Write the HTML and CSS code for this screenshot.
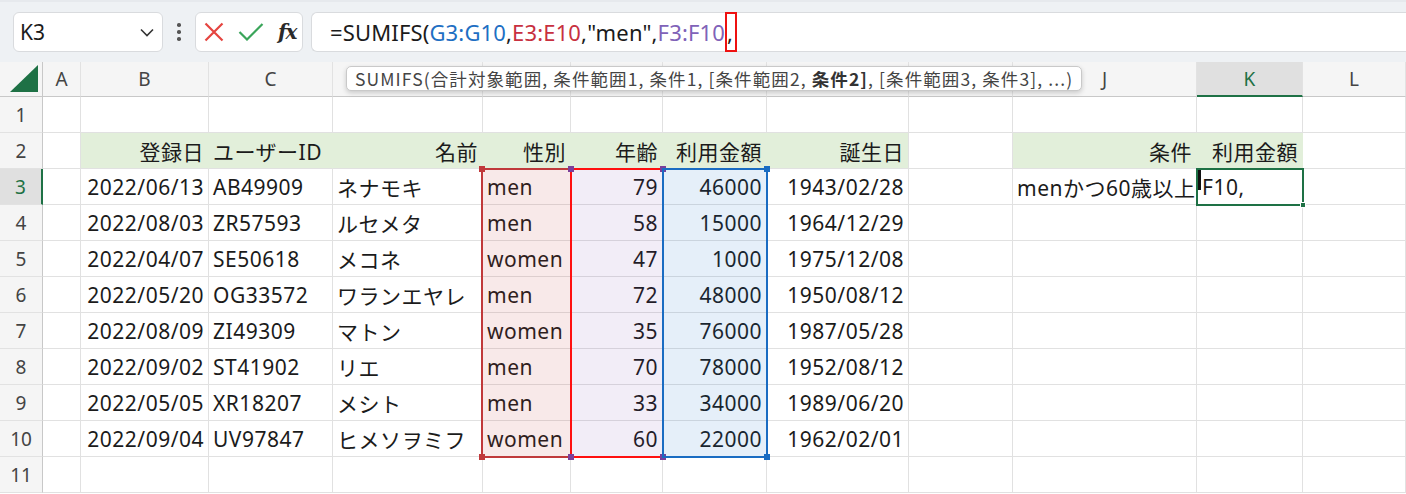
FILE: index.html
```html
<!DOCTYPE html>
<html lang="ja">
<head>
<meta charset="utf-8">
<title>SUMIFS</title>
<link rel="stylesheet" href="styles.css">
</head>
<body>
<div class="toolbar">
  <div class="namebox">
    <span class="nb-text">K3</span>
    <svg class="chev" width="14" height="9" viewBox="0 0 14 9"><path d="M1 1.5 L7 7.5 L13 1.5" fill="none" stroke="#333" stroke-width="1.6"/></svg>
  </div>
  <div class="dots"><span></span><span></span><span></span></div>
  <div class="iconbox">
    <svg width="20" height="20" viewBox="0 0 20 20"><path d="M1.5 1.5 L18.5 18.5 M18.5 1.5 L1.5 18.5" stroke="#e5443f" stroke-width="2.2" fill="none"/></svg>
    <svg width="26" height="18" viewBox="0 0 26 18"><path d="M1.5 9 L9 16.5 L24.5 1" stroke="#3aa55a" stroke-width="2.2" fill="none"/></svg>
    <span class="fx">fx</span>
  </div>
  <div class="formula">
    <span class="f-plain">=SUMIFS(</span><span class="f-blue">G3:G10</span><span class="f-plain">,</span><span class="f-red">E3:E10</span><span class="f-plain">,"men",</span><span class="f-purple">F3:F10</span><span class="f-cursor">,</span>
  </div>
</div>

<div class="sheetwrap">
  <div class="sheet">
    <div class="corner"><svg width="28" height="27" viewBox="0 0 28 27"><polygon points="28,0 28,27 0,27" fill="#1e7145"/></svg></div>
    <div class="hd">A</div><div class="hd">B</div><div class="hd">C</div><div class="hd"></div><div class="hd"></div><div class="hd"></div><div class="hd"></div><div class="hd"></div><div class="hd"></div><div class="hd">J</div><div class="hd hsel">K</div><div class="hd">L</div>

    <div class="rn">1</div><div class="c"></div><div class="c"></div><div class="c"></div><div class="c"></div><div class="c"></div><div class="c"></div><div class="c"></div><div class="c"></div><div class="c"></div><div class="c"></div><div class="c"></div><div class="c"></div>

    <div class="rn">2</div><div class="c"></div><div class="c r gf">登録日</div><div class="c gf">ユーザーID</div><div class="c r gf">名前</div><div class="c r gf">性別</div><div class="c r gf">年齢</div><div class="c r gf">利用金額</div><div class="c r gf gl">誕生日</div><div class="c"></div><div class="c r gf">条件</div><div class="c r gf">利用金額</div><div class="c"></div>

    <div class="rn rsel">3</div><div class="c"></div><div class="c r">2022/06/13</div><div class="c">AB49909</div><div class="c">ネナモキ</div><div class="c">men</div><div class="c r">79</div><div class="c r">46000</div><div class="c r">1943/02/28</div><div class="c"></div><div class="c">menかつ60歳以上</div><div class="c edit"><span class="ibar"></span>F10,</div><div class="c"></div>

    <div class="rn">4</div><div class="c"></div><div class="c r">2022/08/03</div><div class="c">ZR57593</div><div class="c">ルセメタ</div><div class="c">men</div><div class="c r">58</div><div class="c r">15000</div><div class="c r">1964/12/29</div><div class="c"></div><div class="c"></div><div class="c"></div><div class="c"></div>

    <div class="rn">5</div><div class="c"></div><div class="c r">2022/04/07</div><div class="c">SE50618</div><div class="c">メコネ</div><div class="c">women</div><div class="c r">47</div><div class="c r">1000</div><div class="c r">1975/12/08</div><div class="c"></div><div class="c"></div><div class="c"></div><div class="c"></div>

    <div class="rn">6</div><div class="c"></div><div class="c r">2022/05/20</div><div class="c">OG33572</div><div class="c">ワランエヤレ</div><div class="c">men</div><div class="c r">72</div><div class="c r">48000</div><div class="c r">1950/08/12</div><div class="c"></div><div class="c"></div><div class="c"></div><div class="c"></div>

    <div class="rn">7</div><div class="c"></div><div class="c r">2022/08/09</div><div class="c">ZI49309</div><div class="c">マトン</div><div class="c">women</div><div class="c r">35</div><div class="c r">76000</div><div class="c r">1987/05/28</div><div class="c"></div><div class="c"></div><div class="c"></div><div class="c"></div>

    <div class="rn">8</div><div class="c"></div><div class="c r">2022/09/02</div><div class="c">ST41902</div><div class="c">リエ</div><div class="c">men</div><div class="c r">70</div><div class="c r">78000</div><div class="c r">1952/08/12</div><div class="c"></div><div class="c"></div><div class="c"></div><div class="c"></div>

    <div class="rn">9</div><div class="c"></div><div class="c r">2022/05/05</div><div class="c">XR18207</div><div class="c">メシト</div><div class="c">men</div><div class="c r">33</div><div class="c r">34000</div><div class="c r">1989/06/20</div><div class="c"></div><div class="c"></div><div class="c"></div><div class="c"></div>

    <div class="rn">10</div><div class="c"></div><div class="c r">2022/09/04</div><div class="c">UV97847</div><div class="c">ヒメソヲミフ</div><div class="c">women</div><div class="c r">60</div><div class="c r">22000</div><div class="c r">1962/02/01</div><div class="c"></div><div class="c"></div><div class="c"></div><div class="c"></div>

    <div class="rn">11</div><div class="c"></div><div class="c"></div><div class="c"></div><div class="c"></div><div class="c"></div><div class="c"></div><div class="c"></div><div class="c"></div><div class="c"></div><div class="c"></div><div class="c"></div><div class="c"></div>
  </div>

  <div class="range range-e"><i class="tl"></i><i class="tr"></i><i class="bl"></i><i class="br"></i></div>
  <div class="range range-f"><i class="tl"></i><i class="tr"></i><i class="bl"></i><i class="br"></i></div>
  <div class="range range-g"><i class="tl"></i><i class="tr"></i><i class="bl"></i><i class="br"></i></div>
  <div class="active"><i class="br"></i></div>

  <div class="tip">SUMIFS(合計対象範囲, 条件範囲1, 条件1, [条件範囲2, <b>条件2]</b>, [条件範囲3, 条件3], ...)</div>
</div>
</body>
</html>
```

FILE: styles.css
```css
* { box-sizing: border-box; }
html, body { margin: 0; padding: 0; }
body {
  width: 1406px;
  height: 494px;
  overflow: hidden;
  background: #ffffff;
  font-family: "Noto Sans", "Noto Sans CJK JP", sans-serif;
  color: #1b1b1b;
}

/* ---------- formula toolbar ---------- */
.toolbar {
  height: 62px;
  background: #eef1f4;
  display: flex;
  align-items: center;
  padding: 0 0 0 13px;
  border-top: 2px solid #e6e9ed;
}
.namebox {
  width: 150px;
  height: 40px;
  background: #fff;
  border: 1px solid #d9dbde;
  border-radius: 6px;
  display: flex;
  align-items: center;
  justify-content: space-between;
  padding: 0 8px 0 6px;
}
.nb-text { font-size: 21px; color: #1b1b1b; }
.dots {
  width: 32px;
  display: flex;
  flex-direction: column;
  align-items: center;
  gap: 3.5px;
}
.dots span { width: 3.5px; height: 3.5px; border-radius: 50%; background: #555; }
.iconbox {
  width: 108px;
  height: 40px;
  background: #fff;
  border: 1px solid #d9dbde;
  border-radius: 6px;
  display: flex;
  align-items: center;
  padding: 0 0 0 8px;
  gap: 14px;
}
.fx {
  font-family: "DejaVu Serif", "Liberation Serif", serif;
  font-style: italic;
  font-weight: bold;
  font-size: 20px;
  color: #2a2a2a;
  letter-spacing: -1px;
}
.formula {
  flex: 1;
  height: 40px;
  margin-left: 8px;
  background: #fff;
  border: 1px solid #d9dbde;
  border-right: none;
  border-radius: 6px 0 0 6px;
  display: flex;
  align-items: center;
  padding-left: 18px;
  font-size: 22px;
  letter-spacing: 0.15px;
  white-space: pre;
}
.f-plain { color: #1b1b1b; }
.f-blue { color: #1e6fc3; }
.f-red { color: #c8303f; }
.f-purple { color: #8062b8; }
.f-cursor {
  display: inline-block;
  border: 2px solid #ee1111;
  height: 40px;
  line-height: 36px;
  padding: 0 2px 0 0;
}

/* ---------- sheet ---------- */
.sheetwrap { position: relative; }
.sheet {
  display: grid;
  grid-template-columns: 43px 38px 128px 124px 150px 88px 92px 104px 142px 104px 184px 106px 1fr;
  grid-template-rows: 35px repeat(11, 36px);
}
.corner {
  background: #f5f5f5;
  border-right: 1px solid #c8c8c8;
  border-bottom: 1px solid #c8c8c8;
  display: flex;
  align-items: flex-end;
  justify-content: flex-end;
  padding: 0 4px 4px 0;
}
.hd {
  background: #f5f5f5;
  border-right: 1px solid #e2e2e2;
  border-bottom: 1px solid #c8c8c8;
  display: flex;
  align-items: center;
  justify-content: center;
  font-size: 19px;
  color: #444;
}
.hsel {
  background: #e0e0e0;
  color: #1e7145;
  border-bottom: 2px solid #1e7145;
}
.rn {
  background: #f5f5f5;
  border-right: 1px solid #c8c8c8;
  border-bottom: 1px solid #e2e2e2;
  display: flex;
  align-items: center;
  justify-content: center;
  font-size: 19px;
  color: #444;
}
.rsel {
  background: #e0e0e0;
  color: #1e7145;
  border-right: 2px solid #1e7145;
}
.c {
  border-right: 1px solid #e1e1e1;
  border-bottom: 1px solid #e1e1e1;
  display: flex;
  align-items: center;
  padding: 1px 4px 0 4px;
  font-size: 21px;
  letter-spacing: 0.5px;
  white-space: nowrap;
  overflow: visible;
}
.r { justify-content: flex-end; }
.gf { background: #e2efda; border-right-color: #e2efda; }
.gl { border-right-color: #e1e1e1; }
.edit { padding-left: 1px; }
.ibar {
  display: inline-block;
  width: 3px;
  height: 20px;
  background: #111;
  margin-right: 1px;
  align-self: flex-start;
}

/* ---------- reference ranges ---------- */
.range { position: absolute; border: 2px solid; }
.range i { position: absolute; width: 6px; height: 6px; }
.range .tl { left: -4px; top: -4px; }
.range .tr { right: -4px; top: -4px; }
.range .bl { left: -4px; bottom: -4px; }
.range .br { right: -4px; bottom: -4px; }
.range-e { left: 481px; top: 106px; width: 91px; height: 290px; border-color: #c0393b; background: rgba(192, 57, 59, 0.11); }
.range-e i { background: #c0393b; }
.range-f { left: 570px; top: 106px; width: 94px; height: 290px; border-color: #ff1010; background: rgba(112, 60, 170, 0.09); }
.range-f i { background: #7b3f9a; }
.range-g { left: 662px; top: 106px; width: 106px; height: 290px; border-color: #1a6cc2; background: rgba(20, 110, 200, 0.11); }
.range-g i { background: #1a6cc2; }
.range-g .tl, .range-g .bl { display: none; }

.active {
  position: absolute;
  left: 1196px; top: 106px; width: 108px; height: 38px;
  border: 2px solid #1e7145;
}
.active .br { position: absolute; right: -4px; bottom: -4px; width: 6px; height: 6px; background: #1e7145; border: 1px solid #fff; }

/* ---------- tooltip ---------- */
.tip {
  position: absolute;
  left: 346px; top: 4px;
  height: 25px;
  padding: 0 8px 0 8px;
  background: #fff;
  border: 1px solid #c9c9c9;
  border-radius: 5px;
  box-shadow: 0 2px 5px rgba(0, 0, 0, 0.18);
  font-family: "Noto Sans CJK JP", sans-serif;
  font-size: 17.5px;
  letter-spacing: 1.1px;
  line-height: 23px;
  color: #444;
  white-space: nowrap;
}
.tip b { color: #333; }
```
